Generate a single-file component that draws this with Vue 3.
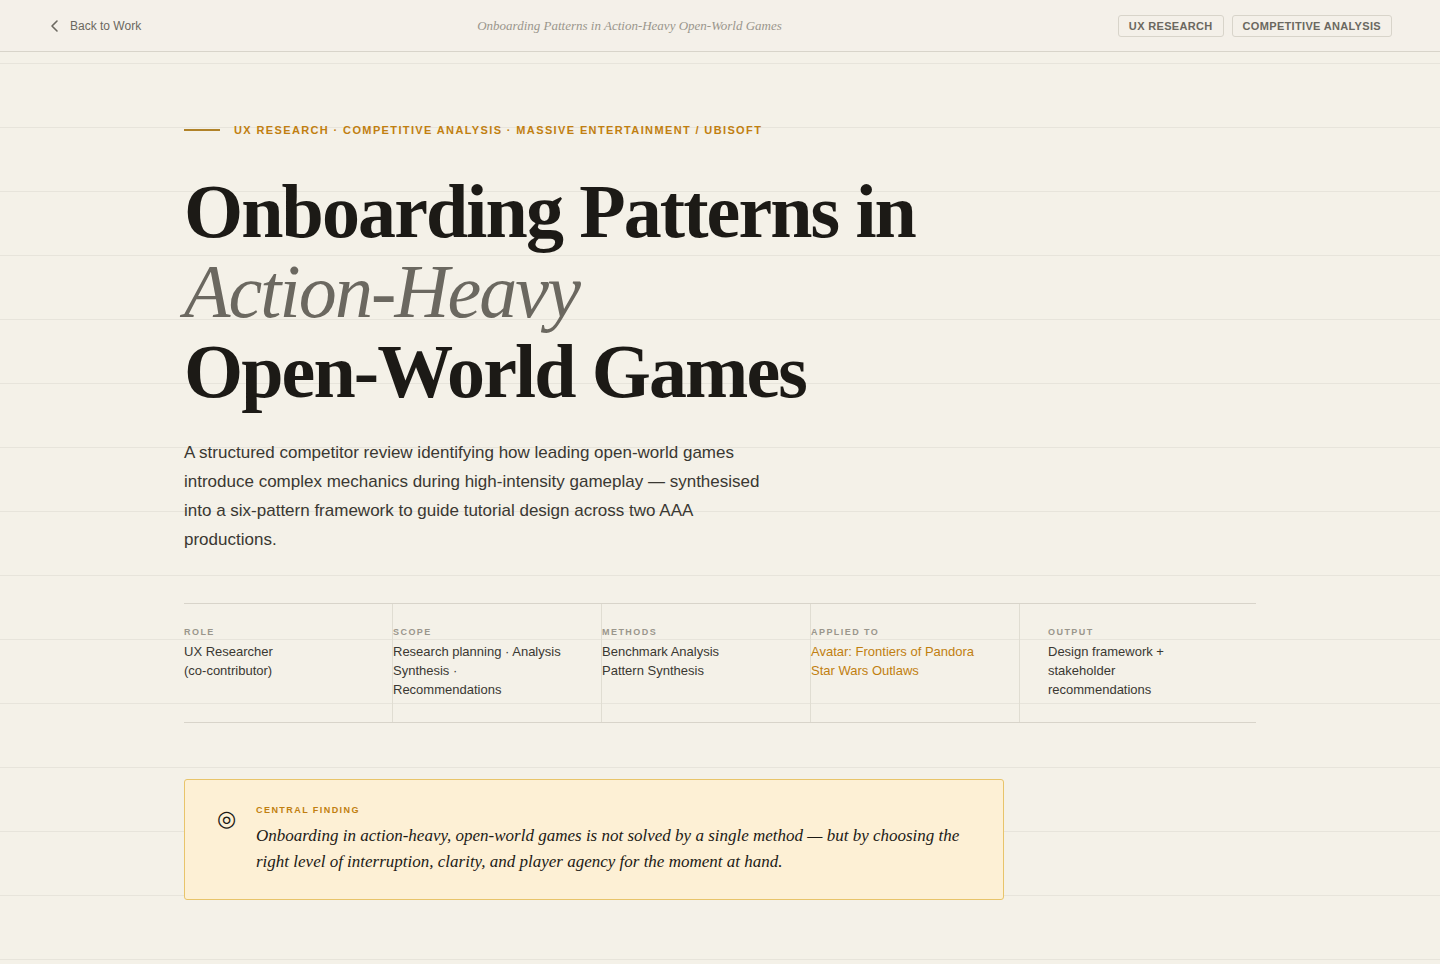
<template>
  <div class="page">
    <header class="topbar">
      <a class="back-link" href="#work">
        <svg class="back-icon" viewBox="0 0 14 14" aria-hidden="true">
          <path d="M9 2L4 7l5 5" />
        </svg>
        Back to Work
      </a>
      <span class="topbar-title">Onboarding Patterns in Action-Heavy Open-World Games</span>
      <div class="tags">
        <span v-for="tag in tags" :key="tag" class="tag">{{ tag }}</span>
      </div>
    </header>

    <main class="hero">
      <p class="eyebrow">UX Research · Competitive Analysis · Massive Entertainment / Ubisoft</p>

      <h1 class="title">
        Onboarding Patterns in<br />
        <em>Action-Heavy</em><br />
        Open-World Games
      </h1>

      <p class="lead">
        A structured competitor review identifying how leading open-world games introduce complex
        mechanics during high-intensity gameplay — synthesised into a six-pattern framework to guide
        tutorial design across two AAA productions.
      </p>

      <dl class="meta">
        <div v-for="item in meta" :key="item.label" class="meta-item">
          <dt>{{ item.label }}</dt>
          <dd :class="{ accent: item.accent }">
            <span v-for="line in item.lines" :key="line">{{ line }}</span>
          </dd>
        </div>
      </dl>

      <aside class="finding">
        <span class="finding-icon" aria-hidden="true">◎</span>
        <div>
          <h2 class="finding-label">Central Finding</h2>
          <p class="finding-text">
            Onboarding in action-heavy, open-world games is not solved by a single method — but by
            choosing the right level of interruption, clarity, and player agency for the moment at
            hand.
          </p>
        </div>
      </aside>
    </main>
  </div>
</template>

<script setup>
const tags = ['UX Research', 'Competitive Analysis'];

const meta = [
  { label: 'Role', lines: ['UX Researcher', '(co-contributor)'] },
  {
    label: 'Scope',
    lines: ['Research planning · Analysis', 'Synthesis ·', 'Recommendations'],
  },
  { label: 'Methods', lines: ['Benchmark Analysis', 'Pattern Synthesis'] },
  {
    label: 'Applied to',
    lines: ['Avatar: Frontiers of Pandora', 'Star Wars Outlaws'],
    accent: true,
  },
  { label: 'Output', lines: ['Design framework +', 'stakeholder', 'recommendations'] },
];
</script>

<style>
body {
  margin: 0;
  background: #f4f1e8;
}
</style>

<style scoped>
.page {
  --ink: #1c1a16;
  --ink-mid: #3a3832;
  --ink-soft: #6b6860;
  --ink-faint: #9a968c;
  --amber: #c17f10;
  --rule: #d8d4ca;
  --serif: 'Liberation Serif', 'Times New Roman', serif;

  min-height: 100vh;
  box-sizing: border-box;
  color: var(--ink);
  font-family: 'Liberation Sans', Arial, sans-serif;
  /* ruled paper */
  background: repeating-linear-gradient(
    to bottom,
    transparent 0,
    transparent 63px,
    #e7e4db 63px,
    #e7e4db 64px
  );
}

.topbar {
  display: flex;
  align-items: center;
  justify-content: space-between;
  height: 52px;
  box-sizing: border-box;
  padding: 0 48px;
  background: #f4f0e9;
  border-bottom: 1px solid var(--rule);
}

.back-link {
  display: flex;
  align-items: center;
  gap: 8px;
  font-size: 12px;
  color: var(--ink-soft);
  text-decoration: none;
}

.back-icon {
  width: 14px;
  height: 14px;
  fill: none;
  stroke: currentColor;
  stroke-width: 1.6;
  stroke-linecap: round;
  stroke-linejoin: round;
}

.topbar-title {
  font-family: var(--serif);
  font-size: 13px;
  font-style: italic;
  color: var(--ink-faint);
}

.tags {
  display: flex;
  gap: 8px;
}

.tag {
  padding: 4px 10px;
  border: 1px solid var(--rule);
  border-radius: 3px;
  font-size: 11px;
  font-weight: 700;
  line-height: 12px;
  letter-spacing: 0.03em;
  text-transform: uppercase;
  color: var(--ink-soft);
}

.hero {
  max-width: 1072px;
  margin: 0 auto;
  padding: 72px 48px 64px;
}

.eyebrow {
  display: flex;
  align-items: center;
  gap: 14px;
  margin: 0 0 35px;
  font-size: 11px;
  font-weight: 700;
  line-height: 12px;
  letter-spacing: 0.125em;
  text-transform: uppercase;
  color: var(--amber);
}

.eyebrow::before {
  content: '';
  width: 36px;
  height: 2px;
  background: #b08228;
}

.title {
  margin: 0 0 27px;
  font-family: var(--serif);
  font-size: 76px;
  font-weight: 700;
  line-height: 80px;
  letter-spacing: -0.025em;
}

.title em {
  font-weight: 400;
  color: var(--ink-soft);
}

.lead {
  max-width: 600px;
  margin: 0 0 49px;
  font-size: 17px;
  line-height: 29px;
  color: var(--ink-mid);
}

.meta {
  display: flex;
  margin: 0 0 56px;
  border-top: 1px solid var(--rule);
  border-bottom: 1px solid var(--rule);
}

.meta-item {
  flex: 1;
  padding: 23px 28px 23px 0;
  border-right: 1px solid #e0ddd2;
}

.meta-item:last-child {
  padding-left: 28px;
  border-right: none;
}

.meta dt {
  margin-bottom: 4px;
  font-size: 9px;
  font-weight: 700;
  line-height: 11px;
  letter-spacing: 0.16em;
  text-transform: uppercase;
  color: var(--ink-faint);
}

.meta dd {
  margin: 0;
  font-size: 13px;
  line-height: 19px;
  color: var(--ink-mid);
}

.meta dd span {
  display: block;
}

.meta dd.accent {
  color: var(--amber);
}

.finding {
  display: flex;
  align-items: flex-start;
  gap: 20px;
  max-width: 820px;
  box-sizing: border-box;
  padding: 24px 32px;
  background: #fdf0d5;
  border: 1px solid #e8c46a;
  border-radius: 3px;
}

.finding-icon {
  font-size: 22px;
  line-height: 30px;
}

.finding-label {
  margin: 0 0 7px;
  font-size: 9px;
  font-weight: 700;
  line-height: 12px;
  letter-spacing: 0.16em;
  text-transform: uppercase;
  color: var(--amber);
}

.finding-text {
  margin: 0;
  font-family: var(--serif);
  font-size: 17px;
  font-style: italic;
  line-height: 26px;
}
</style>
